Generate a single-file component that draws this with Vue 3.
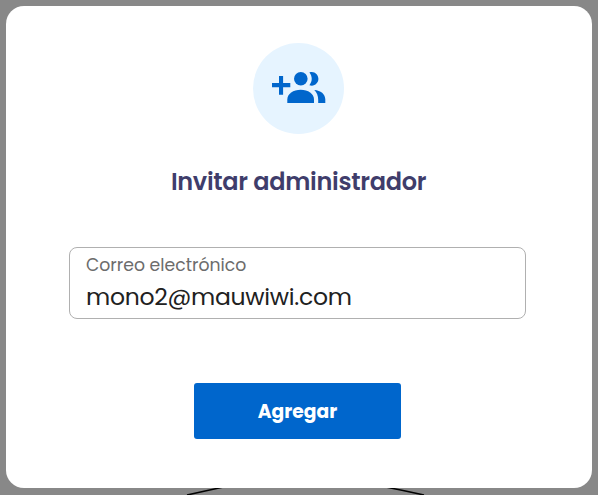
<script setup>
import { ref } from 'vue'

const email = ref('mono2@mauwiwi.com')
</script>

<template>
  <main class="backdrop">
    <svg class="curve" viewBox="0 0 598 12" aria-hidden="true">
      <path d="M187 12Q207 7.5 227 3.2M382 3.2Q404 7.5 424 12" />
    </svg>
    <section class="dialog">
      <div class="badge">
        <svg class="people" viewBox="0 0 54 34" aria-hidden="true">
          <path d="M7 4.9h4.1v7.2h7.2v4.1h-7.2v7.5H7v-7.5H0v-4.1h7z" />
          <circle cx="28.8" cy="7.8" r="6.8" />
          <path d="M15.3 32v-3.3c0-6 6-9.9 13.4-9.9s13.3 3.9 13.3 9.9V32z" />
          <path d="M37.4 14.2c3.1-4 3.1-8.8 0-12.8 4.6-1.7 9 1.8 9 6.4s-4.4 8.1-9 6.4z" />
          <path d="M42.3 18.9c6.4.4 11 4.1 11 9.4V32h-7.1v-3.3c0-4-1.4-7.4-3.9-9.8z" />
        </svg>
      </div>
      <h1 class="title">Invitar administrador</h1>
      <label class="field">
        <span class="caption">Correo electrónico</span>
        <input v-model="email" class="value" type="text" spellcheck="false" />
      </label>
      <button class="submit" type="button"><span>Agregar</span></button>
    </section>
  </main>
</template>

<style>
body {
  margin: 0;
  background: #888;
}
</style>

<style scoped>
.backdrop {
  position: relative;
  box-sizing: border-box;
  height: 495px;
  padding: 5.5px 6.5px 7.5px 5.5px;
  overflow: hidden;
  background: #888;
  font-family: Poppins, Inter, sans-serif;
}

.curve {
  position: absolute;
  left: 0;
  bottom: 0;
  width: 598px;
  height: 12px;
  fill: none;
  stroke: #000;
  stroke-width: 1.6;
}

.dialog {
  position: relative;
  box-sizing: border-box;
  display: flex;
  flex-direction: column;
  align-items: center;
  height: 100%;
  padding-top: 37px;
  border-radius: 18px;
  background: #fff;
}

.badge {
  box-sizing: border-box;
  width: 91px;
  height: 91px;
  padding: 28.5px 0 0 19px;
  border-radius: 50%;
  background: #e6f4ff;
}

.people {
  display: block;
  width: 54px;
  height: 34px;
  fill: #0066cc;
}

.title {
  margin: 30.5px 0 0;
  height: 36px;
  font-size: 24px;
  font-weight: 600;
  line-height: 36px;
  letter-spacing: -0.28px;
  white-space: nowrap;
  color: #3f3d6b;
}

.field {
  box-sizing: border-box;
  display: flex;
  flex-direction: column;
  width: 457px;
  height: 72px;
  margin: 47px 3px 0 0;
  padding: 5px 16.5px 0;
  border: 1.5px solid #b0b0b0;
  border-radius: 8px;
}

.caption {
  height: 25px;
  font-size: 17.25px;
  line-height: 25px;
  white-space: nowrap;
  color: #6c6c6c;
}

.value {
  width: 100%;
  height: 38px;
  padding: 0;
  border: 0;
  outline: 0;
  background: transparent;
  font: inherit;
  font-size: 23.5px;
  line-height: 38px;
  letter-spacing: -0.27px;
  color: #212121;
}

.submit {
  width: 207px;
  height: 56px;
  margin: 64px 2px 0 0;
  padding: 2px 0 0;
  border: 0;
  border-radius: 3px;
  background: #0066cc;
  color: #fff;
  font: inherit;
  font-size: 18.7px;
  font-weight: 700;
  line-height: 54px;
}
</style>
